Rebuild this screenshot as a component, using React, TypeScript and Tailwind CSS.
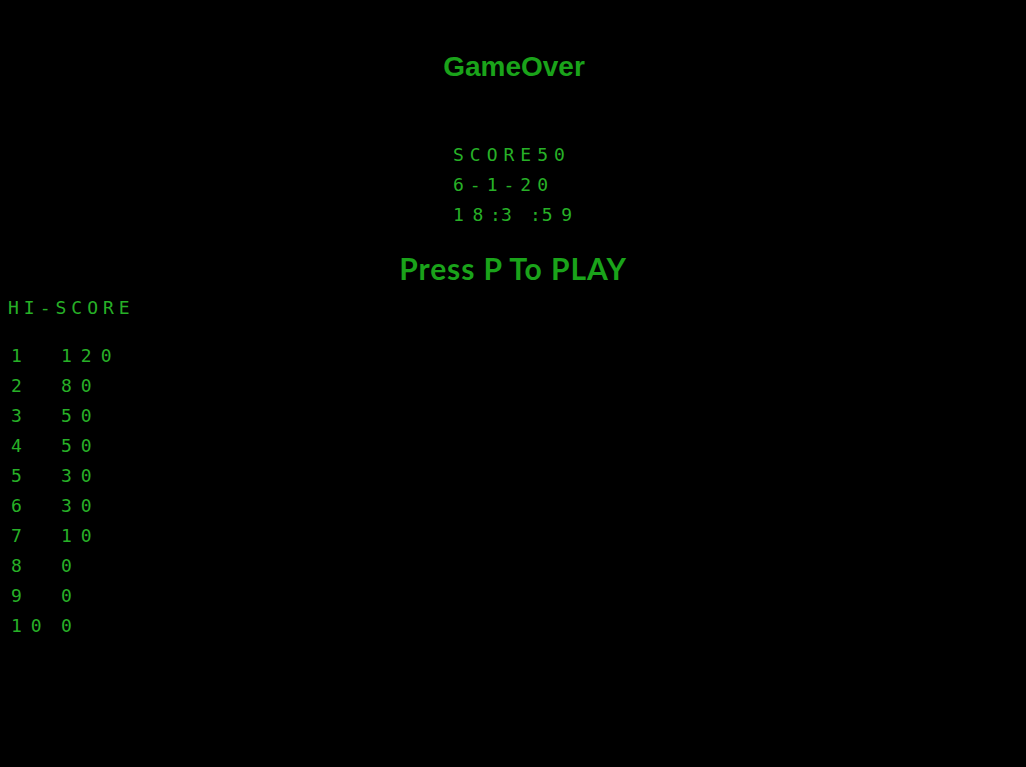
import React from 'react';

const hiScores: [number, number][] = [
  [1, 120],
  [2, 80],
  [3, 50],
  [4, 50],
  [5, 30],
  [6, 30],
  [7, 10],
  [8, 0],
  [9, 0],
  [10, 0],
];

const mono = "font-['DejaVu_Sans_Mono','Liberation_Mono',monospace]";

const clock: [string, string][] = [
  ['1', 'w-[20px]'],
  ['8', 'w-[18px]'],
  [':', 'w-[11px]'],
  ['3', 'w-[30px]'],
  [':', 'w-[12px]'],
  ['5', 'w-[20px]'],
  ['9', 'w-[12px]'],
];

const App: React.FC = () => {
  return (
    <div className="w-full h-[767px] bg-black text-[#1aa31a] overflow-hidden">
      <div className="flex flex-col items-center pt-[51px]">
        <h1 className="font-['Liberation_Sans',Arial,sans-serif] font-bold text-[28px] leading-[32px] pl-[2px]">
          GameOver
        </h1>

        {/* last round info */}
        <div className={`${mono} mt-[57px] w-[120px] text-[18px] leading-[30px] tracking-[6px] whitespace-pre text-[#27b027]`}>
          <div>SCORE50</div>
          <div>6-1-20</div>
          <div className="flex">
            {clock.map(([ch, w], i) => (
              <span key={i} className={`${w} tracking-normal`}>
                {ch}
              </span>
            ))}
          </div>
        </div>

        <div className="mt-[20px] font-['Lato','Noto_Sans',sans-serif] font-bold text-[30px] leading-[36px] tracking-[0.9px]">
          Press P To PLAY
        </div>
      </div>

      <div className={`${mono} mt-[7px] pl-[8px] text-[18px] leading-[30px] tracking-[5px] text-[#27b027]`}>
        HI-SCORE
      </div>

      <div className={`${mono} mt-[18px] pl-[11px] text-[18px] leading-[30px] tracking-[9px] text-[#27b027]`}>
        {hiScores.map(([rank, score]) => (
          <div key={rank} className="flex">
            <span className="w-[50px]">{rank}</span>
            <span>{score}</span>
          </div>
        ))}
      </div>
    </div>
  );
};

export default App;
